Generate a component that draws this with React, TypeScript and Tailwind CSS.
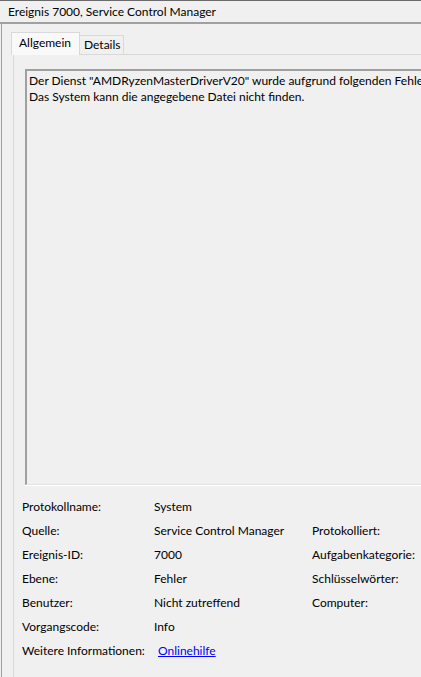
import React from 'react';

const rows: [string, React.ReactNode, string?][] = [
    ['Protokollname:', 'System'],
    ['Quelle:', 'Service Control Manager', 'Protokolliert:'],
    ['Ereignis-ID:', '7000', 'Aufgabenkategorie:'],
    ['Ebene:', 'Fehler', 'Schlüsselwörter:'],
    ['Benutzer:', 'Nicht zutreffend', 'Computer:'],
    ['Vorgangscode:', 'Info'],
    [
        'Weitere Informationen:',
        <a href="#" className="ml-[4px] text-[#0000ff] underline">Onlinehilfe</a>,
    ],
];

export default function App() {
    return (
        <div
            className="w-[421px] h-[677px] overflow-hidden bg-[#f0f0f0] text-[12px] text-black flex flex-col"
            style={{ fontFamily: "'Segoe UI', Lato, 'Noto Sans', sans-serif" }}
        >
            {/* Titelzeile */}
            <div className="h-[22px] shrink-0 border-t border-[#6b6b6b] pl-2 flex items-center whitespace-nowrap">
                Ereignis 7000, Service Control Manager
            </div>
            <div className="h-[2px] shrink-0 bg-[#a0a0a0]" />

            <div className="flex-1 ml-px border-l border-[#a0a0a0] flex flex-col min-h-0">
                {/* Reiter */}
                <div className="flex items-end pl-[9px] pt-[7px] h-[30px] shrink-0">
                    <div className="h-[23px] w-[69px] border border-b-0 border-[#d9d9d9] bg-[#f9f9f9] pl-[7px] pt-[1px] relative z-10 -mb-px">
                        Allgemein
                    </div>
                    <div className="h-[19px] w-[44px] border border-l-0 border-b-0 border-[#d9d9d9] pl-[4px] leading-[17px]">
                        Details
                    </div>
                </div>

                {/* Reiterinhalt */}
                <div className="flex-1 ml-[11px] border-t border-l border-[#d9d9d9] pt-[14px] pl-[11px] flex flex-col min-h-0">
                    <div className="h-[416px] shrink-0 border-t-2 border-l-2 border-t-[#a0a0a0] border-l-[#a0a0a0] border-b border-b-[#e3e3e3] shadow-[0_1px_0_#ffffff] pl-[2px] pt-[2px] leading-[16px] whitespace-nowrap overflow-hidden">
                        <div>Der Dienst "AMDRyzenMasterDriverV20" wurde aufgrund folgenden Fehlers nicht gestartet:</div>
                        <div>Das System kann die angegebene Datei nicht finden.</div>
                    </div>

                    <div className="mt-[10px] -ml-[3px] flex flex-col">
                        {rows.map(([label, value, third], i) => (
                            <div key={i} className="h-[24px] flex items-center whitespace-nowrap">
                                <span className="w-[132px] shrink-0">{label}</span>
                                <span className="w-[158px] shrink-0">{value}</span>
                                {third && <span>{third}</span>}
                            </div>
                        ))}
                    </div>
                </div>
            </div>
        </div>
    );
}
